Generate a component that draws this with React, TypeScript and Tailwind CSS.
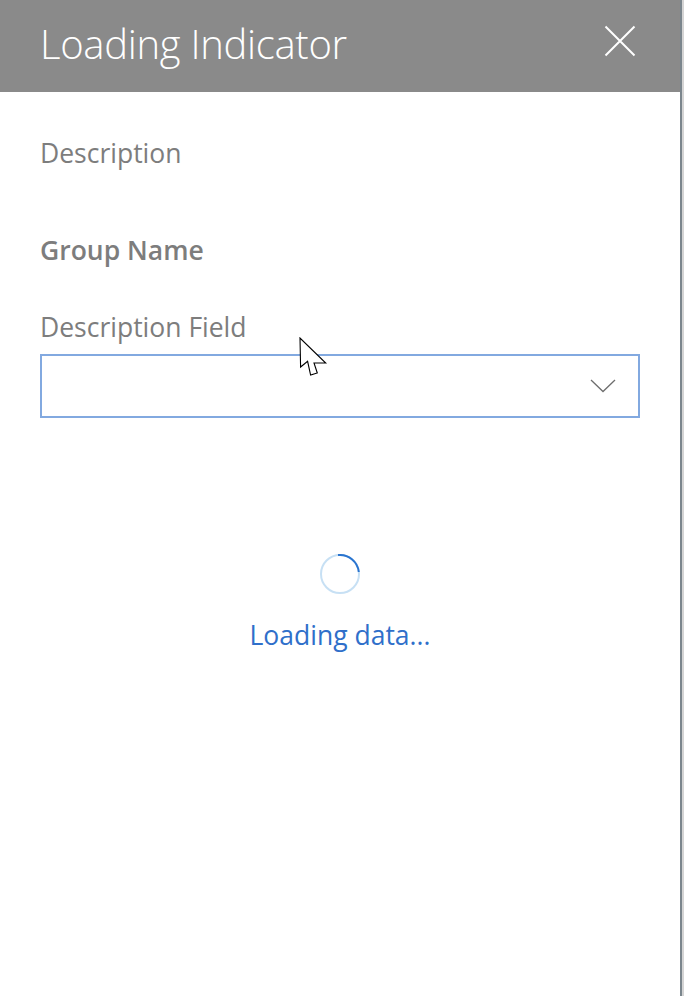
import React from "react";

function Spinner() {
  return (
    <svg width="40" height="40" viewBox="0 0 40 40">
      <circle cx="20" cy="20" r="19" fill="none" stroke="#c7e0f4" strokeWidth="2" />
      <path d="M18 1.1 A19 19 0 0 1 38.8 18" fill="none" stroke="#2a74cf" strokeWidth="2" />
    </svg>
  );
}

function Cursor() {
  return (
    <svg width="30" height="42" viewBox="0 0 30 42" className="absolute left-[299px] top-[337px]">
      <path
        d="M1 1 L1.6 30 L8.6 24.3 L11.6 38 L18.3 36 L15 26 L26.7 26 Z"
        fill="#ffffff"
        stroke="#000000"
        strokeWidth="1.1"
        strokeLinejoin="miter"
      />
    </svg>
  );
}

export default function App() {
  return (
    <div className="relative flex h-[996px] w-[684px] bg-white" style={{ fontFamily: '"Open Sans", "Noto Sans", sans-serif' }}>
      <div className="flex w-[680px] flex-col">
        <div className="flex h-[92px] items-center justify-between bg-[#8a8a8a] pl-[40px] pr-[44px]">
          <span className="pb-[4px] text-[40px] font-light leading-[40px] tracking-[-0.3px] text-white">Loading Indicator</span>
          <svg width="32" height="32" viewBox="0 0 32 32" className="mb-[10px]">
            <path d="M1.5 1.5 L30.5 30.5 M30.5 1.5 L1.5 30.5" stroke="#ffffff" strokeWidth="2" />
          </svg>
        </div>
        <div className="flex flex-col px-[40px]">
          <div className="mt-[43px] text-[26.5px] leading-[36px] text-[#7d7d7d]">Description</div>
          <div className="mt-[61px] text-[26.5px] font-semibold leading-[36px] text-[#7d7d7d]">Group Name</div>
          <div className="mt-[41px] text-[26.5px] leading-[36px] text-[#7d7d7d]">Description Field</div>
          <div className="mt-[9px] flex h-[64px] w-[600px] items-center justify-end border-2 border-[#82a9e0] pr-[22px]">
            <svg width="26" height="14" viewBox="0 0 26 14">
              <path d="M1 1 L13 12.5 L25 1" fill="none" stroke="#6e6e6e" strokeWidth="1.3" />
            </svg>
          </div>
          <div className="mt-[136px] flex flex-col items-center">
            <Spinner />
            <div className="mt-[23px] text-[26.5px] leading-[36px] text-[#2f6fca]">Loading data...</div>
          </div>
        </div>
      </div>
      <div className="w-[2px] bg-[#7b868d]" />
      <div className="w-[2px] bg-[#d4d4d4]" />
      <Cursor />
    </div>
  );
}
